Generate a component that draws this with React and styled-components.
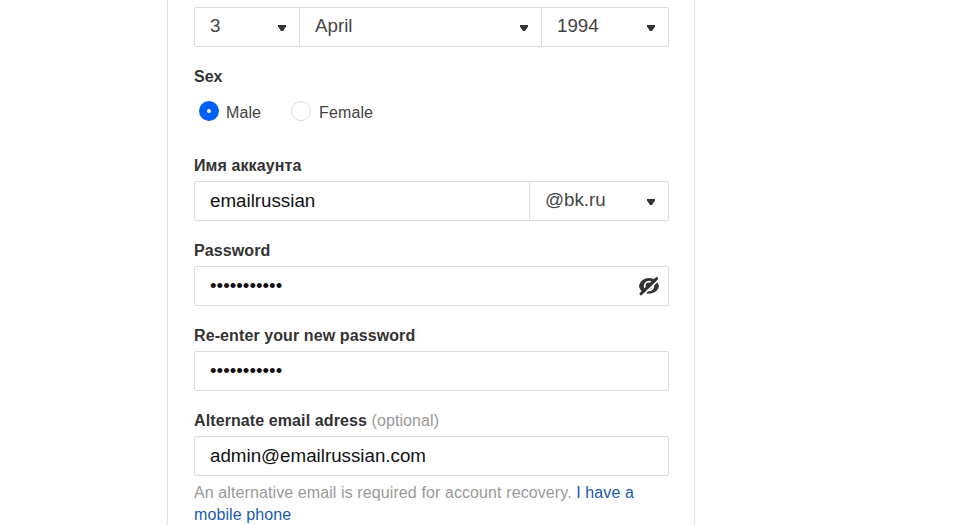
import React, { useState } from 'react';
import styled, { createGlobalStyle } from 'styled-components';

const GlobalStyle = createGlobalStyle`
  * {
    box-sizing: border-box;
  }

  body {
    margin: 0;
    overflow: hidden;
    background-color: #fff;
    color: #333;
    font-family: 'Liberation Sans', Arial, sans-serif;
    font-size: 16px;
  }
`;

const Panel = styled.main`
  width: 528px;
  height: 525px;
  margin-left: 167px;
  padding: 7px 25px 0 26px;
  overflow: hidden;
  border-left: 1px solid #e0e0e0;
  border-right: 1px solid #e0e0e0;
`;

const Form = styled.form`
  display: flex;
  flex-direction: column;
`;

const Field = styled.div`
  display: flex;
  flex-direction: column;
  margin-top: 20px;
`;

const Label = styled.label`
  height: 25px;
  line-height: 20px;
  font-weight: bold;
  letter-spacing: ${(props) => props.$spacing || '0.1px'};
`;

const Optional = styled.span`
  color: #999;
  font-weight: normal;
`;

const Control = styled.div`
  display: flex;
  height: 40px;
  border: 1px solid #dcdcdc;
  border-radius: 2px;
`;

const Select = styled.button`
  display: flex;
  justify-content: space-between;
  align-items: center;
  width: ${(props) => props.$width};
  padding: 0 13px 0 15px;
  border: none;
  border-left: ${(props) => (props.$divided ? '1px solid #dcdcdc' : 'none')};
  background: none;
  color: #444;
  font-family: inherit;
  font-size: 18.75px;
  line-height: 22px;

  span {
    margin-bottom: 3px;
  }

  svg {
    margin-top: 2px;
  }
`;

const Input = styled.input`
  flex: 1;
  min-width: 0;
  height: 38px;
  padding: 0 15px;
  border: none;
  outline: none;
  background: none;
  color: #111;
  font-family: inherit;
  font-size: 18.75px;
`;

const EyeButton = styled.button`
  display: flex;
  align-items: center;
  padding: 0 8px 0 0;
  border: none;
  background: none;
`;

const RadioGroup = styled.div`
  display: flex;
  gap: 30px;
  height: 20px;
  margin: 9px 0 15px 5px;
`;

const RadioLabel = styled.label`
  display: flex;
  align-items: center;
  gap: ${(props) => props.$gap || '7px'};
  color: #444;
  line-height: 20px;
  letter-spacing: 0.1px;

  span {
    padding-top: 3px;
  }
`;

const Radio = styled.input`
  appearance: none;
  width: 20px;
  height: 20px;
  margin: 0;
  border: 1px solid #dcdcdc;
  border-radius: 50%;

  &:checked {
    border: 8px solid #005ff9;
  }
`;

const Hint = styled.p`
  margin: 6px 0 0;
  color: #999;
  line-height: 22px;
  letter-spacing: 0.1px;

  a {
    color: #1a5bb0;
    text-decoration: none;
  }
`;

const Arrow = () => (
  <svg width='8' height='8' viewBox='0 0 8 8'>
    <path d='M0 1h8v1.6L5 7H3L0 2.6z' fill='#333' />
  </svg>
);

const HiddenEye = () => (
  <svg width='22' height='20' viewBox='0 0 22 20'>
    <path d='M1 10.2C2 5 6 2 11 2s8.5 3 10 8.2c-1.5 4.8-5 7.3-10 7.3S2 15 1 10.2z' fill='#333' />
    <circle cx='11' cy='10' r='4.3' fill='none' stroke='#fff' strokeWidth='1.8' />
    <path d='M4.4 19.6L21.5 3' stroke='#fff' strokeWidth='1.8' />
    <path d='M3 17.8L18.6 2.6' stroke='#333' strokeWidth='3' strokeLinecap='round' />
  </svg>
);

const Dropdown = ({ value, width, divided }) => (
  <Select type='button' $width={width} $divided={divided}>
    <span>{value}</span>
    <Arrow />
  </Select>
);

const App = () => {
  const [sex, setSex] = useState('male');

  return (
    <>
      <GlobalStyle />
      <Panel>
        <Form>
          <Control>
            <Dropdown value='3' width='104px' />
            <Dropdown value='April' width='242px' divided />
            <Dropdown value='1994' width='127px' divided />
          </Control>

          <Field>
            <Label as='div' $spacing='0'>Sex</Label>
          </Field>
          <RadioGroup>
            <RadioLabel>
              <Radio type='radio' name='sex' checked={sex === 'male'} onChange={() => setSex('male')} />
              <span>Male</span>
            </RadioLabel>
            <RadioLabel $gap='8px'>
              <Radio type='radio' name='sex' checked={sex === 'female'} onChange={() => setSex('female')} />
              <span>Female</span>
            </RadioLabel>
          </RadioGroup>

          <Field>
            <Label htmlFor='account'>Имя аккаунта</Label>
            <Control>
              <Input id='account' defaultValue='emailrussian' spellCheck={false} />
              <Dropdown value='@bk.ru' width='139px' divided />
            </Control>
          </Field>

          <Field>
            <Label htmlFor='password'>Password</Label>
            <Control>
              <Input id='password' type='password' defaultValue='password123' />
              <EyeButton type='button'>
                <HiddenEye />
              </EyeButton>
            </Control>
          </Field>

          <Field>
            <Label htmlFor='repeat'>Re-enter your new password</Label>
            <Control>
              <Input id='repeat' type='password' defaultValue='password123' />
            </Control>
          </Field>

          <Field>
            <Label htmlFor='alternate'>
              Alternate email adress <Optional>(optional)</Optional>
            </Label>
            <Control>
              <Input id='alternate' defaultValue='admin@emailrussian.com' spellCheck={false} />
            </Control>
            <Hint>
              An alternative email is required for account recovery. <a href='#phone'>I have a mobile phone</a>
            </Hint>
          </Field>
        </Form>
      </Panel>
    </>
  );
};

export default App;
